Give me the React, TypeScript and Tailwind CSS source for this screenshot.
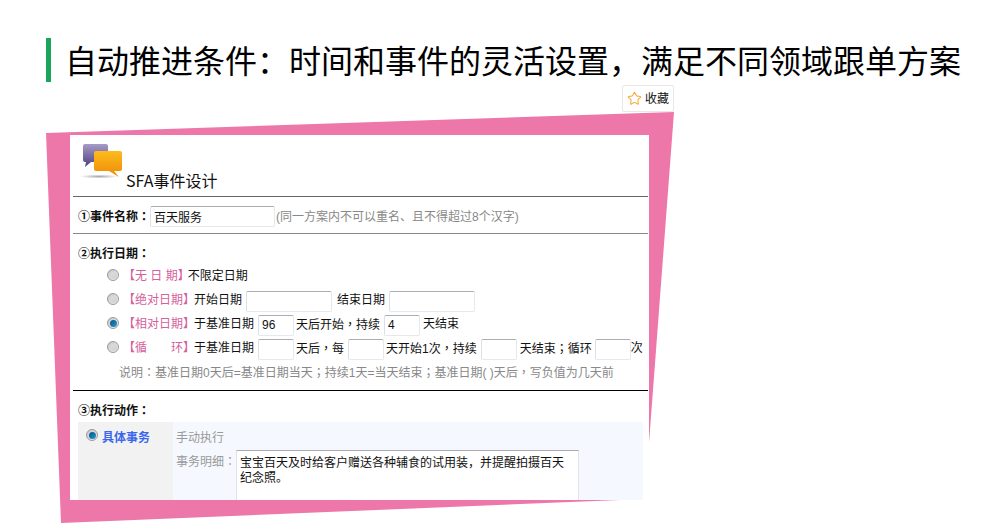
import { Star } from "lucide-react";

function Radio({ checked = false, className = "" }: { checked?: boolean; className?: string }) {
  return (
    <span
      className={`flex h-[12px] w-[12px] shrink-0 items-center justify-center rounded-full border border-[#9a9a9a] bg-gradient-to-br from-[#c4c4c4] to-[#f4f4f4] ${className}`}
    >
      {checked ? (
        <span className="h-[7px] w-[7px] rounded-full bg-gradient-to-br from-[#0a4f86] to-[#22a0d0]" />
      ) : (
        <span className="h-[7px] w-[7px] rounded-full bg-gradient-to-br from-[#dcdcdc] to-[#cfcfcf]" />
      )}
    </span>
  );
}

function Box({ className = "", value = "" }: { className?: string; value?: string }) {
  return (
    <input
      readOnly
      value={value}
      className={`mt-[2px] h-[21px] shrink-0 rounded-[2px] border border-[#e3e9ef] border-t-[#abadb3] border-l-[#dbdfe6] bg-white px-[3px] text-[12px] text-[#111] outline-none ${className}`}
    />
  );
}

// small print uses centred punctuation in the reference
function Mark({ children }: { children: React.ReactNode }) {
  return <span className="font-['Noto_Sans_CJK_TC',sans-serif]">{children}</span>;
}

function DateRow({ checked, children }: { checked?: boolean; children: React.ReactNode }) {
  return (
    <div className="flex h-[24px] items-center whitespace-nowrap pl-[34px] pt-[2px]">
      <Radio checked={checked} className="-mt-[2px]" />
      {children}
    </div>
  );
}

function RowLabel({ children }: { children: React.ReactNode }) {
  return <span className="ml-[4px] w-[71px] shrink-0 text-[#d4609c]">{children}</span>;
}

function ChatIcon() {
  return (
    <svg width="44" height="36" viewBox="0 0 44 36" className="shrink-0">
      <defs>
        <linearGradient id="purple" x1="0" y1="0" x2="0" y2="1">
          <stop offset="0" stopColor="#a79cc6" />
          <stop offset="1" stopColor="#4a3f7e" />
        </linearGradient>
        <linearGradient id="orange" x1="0" y1="0" x2="0" y2="1">
          <stop offset="0" stopColor="#fdbb1c" />
          <stop offset="1" stopColor="#ee8a06" />
        </linearGradient>
        <radialGradient id="shade">
          <stop offset="0" stopColor="#a8a8a8" />
          <stop offset="1" stopColor="#ffffff" />
        </radialGradient>
      </defs>
      <ellipse cx="19" cy="33.5" rx="19" ry="2" fill="url(#shade)" />
      <path
        d="M5 1h21a2 2 0 0 1 2 2v14a2 2 0 0 1-2 2H11l-6 5 1-5H5a2 2 0 0 1-2-2V3a2 2 0 0 1 2-2z"
        fill="url(#purple)"
      />
      <path
        d="M16 8h24a2 2 0 0 1 2 2v16a2 2 0 0 1-2 2h-6l5 6-10-6H16a2 2 0 0 1-2-2V10a2 2 0 0 1 2-2z"
        fill="url(#orange)"
      />
    </svg>
  );
}

export default function App() {
  return (
    <div className="h-[529px] w-[1005px] overflow-hidden bg-white font-['Liberation_Sans','Noto_Sans_CJK_SC',sans-serif] text-[12px] text-[#111]">
      <header className="flex items-start pl-[46px] pt-[38px]">
        <span className="h-[44px] w-[5px] bg-[#1ba55a]" />
        <h1 className="ml-[14px] whitespace-nowrap pt-[2px] text-[32px] font-normal leading-[44px] text-black">
          自动推进条件：时间和事件的灵活设置，满足不同领域跟单方案
        </h1>
      </header>

      <div className="relative mt-[51px] h-[394px] pl-[70px]">
        {/* pink card tilted behind the form */}
        <svg className="absolute left-0 top-[-23px]" width="700" height="420" viewBox="0 0 700 420">
          <polygon points="46,21 674,0 648,344 620,388 61,411" fill="#ee77aa" />
        </svg>

        <div className="absolute left-[622px] top-[-50px] flex h-[27px] w-[52px] items-center justify-center gap-[3px] rounded-[2px] border border-[#e8e8e8] bg-white">
          <Star size={15} strokeWidth={1.8} className="text-[#f5b04a]" />
          <span>收藏</span>
        </div>

        <main className="relative h-[365px] w-[579px] overflow-hidden bg-white pl-[3px]">
          <div className="w-[575px]">
            <div className="flex h-[62px] items-start border-b border-[#666] pl-[7px] pt-[8px]">
              <ChatIcon />
              <span className="ml-[2px] mt-[25px] font-['Noto_Sans_CJK_SC',sans-serif] text-[16px] leading-[24px]">
                SFA事件设计
              </span>
            </div>

            <div className="flex h-[37px] items-center border-b border-[#888] pl-[5px] pt-[3px]">
              <b className="w-[72px] shrink-0 whitespace-nowrap">
                ①事件名称<Mark>：</Mark>
              </b>
              <Box className="!mt-0 w-[125px]" value="百天服务" />
              <span className="ml-[1px] text-[#888]">(同一方案内不可以重名、且不得超过8个汉字)</span>
            </div>

            <section className="h-[157px] border-b border-black pt-[9px]">
              <b className="block h-[20px] whitespace-nowrap pl-[5px] leading-[20px]">
                ②执行日期<Mark>：</Mark>
              </b>
              <DateRow>
                <span className="-mr-[2px] ml-[4px] text-[#d4609c]">【无 日 期】</span>
                不限定日期
              </DateRow>
              <DateRow>
                <RowLabel>【绝对日期】</RowLabel>
                开始日期
                <Box className="ml-[4px] w-[86px]" />
                <span className="ml-[5px]">结束日期</span>
                <Box className="ml-[4px] w-[86px]" />
              </DateRow>
              <DateRow checked>
                <RowLabel>【相对日期】</RowLabel>
                于基准日期
                <Box className="ml-[4px] w-[36px]" value="96" />
                <span className="ml-[2px]">
                  天后开始<Mark>，</Mark>持续
                </span>
                <Box className="ml-[4px] w-[36px]" value="4" />
                <span className="ml-[3px]">天结束</span>
              </DateRow>
              <DateRow>
                <RowLabel>
                  【循<span className="inline-block w-[24px]" />环】
                </RowLabel>
                于基准日期
                <Box className="ml-[4px] w-[36px]" />
                <span className="ml-[2px]">
                  天后<Mark>，</Mark>每
                </span>
                <Box className="ml-[4px] w-[36px]" />
                <span className="ml-[2px]">
                  天开始1次<Mark>，</Mark>持续
                </span>
                <Box className="ml-[4px] w-[36px]" />
                <span className="ml-[3px]">
                  天结束<Mark>；</Mark>循环
                </span>
                <Box className="ml-[3px] w-[36px]" />
                次
              </DateRow>
              <p className="h-[24px] whitespace-nowrap pl-[46px] pt-[1px] leading-[24px] text-[#888]">
                说明<Mark>：</Mark>基准日期0天后=基准日期当天<Mark>；</Mark>持续1天=当天结束<Mark>；</Mark>基准日期( )天后
                <Mark>，</Mark>写负值为几天前
              </p>
            </section>

            <b className="block h-[31px] whitespace-nowrap pl-[5px] pt-[10px] leading-[18px]">
              ③执行动作<Mark>：</Mark>
            </b>

            <div className="ml-[5px] flex h-[78px] w-[565px]">
              <div className="flex w-[95px] shrink-0 items-start bg-[#f2f2f2] pl-[8px] pt-[7px]">
                <Radio checked />
                <b className="ml-[4px] mt-[1px] leading-[16px] text-[#3a66ee]">具体事务</b>
              </div>
              <div className="flex-1 bg-[#f5f9ff] pl-[3px] pt-[8px]">
                <div className="leading-[16px] text-[#999]">手动执行</div>
                <div className="mt-[4px] flex items-start">
                  <span className="w-[60px] shrink-0 whitespace-nowrap pt-[3px] leading-[16px] text-[#999]">
                    事务明细<Mark>：</Mark>
                  </span>
                  <textarea
                    readOnly
                    value="宝宝百天及时给客户赠送各种辅食的试用装，并提醒拍摄百天纪念照。"
                    className="h-[70px] w-[343px] resize-none overflow-hidden border border-[#dfe3ea] border-t-[#abadb3] bg-white px-[3px] py-[5px] text-[12px] leading-[15px] text-[#111] outline-none"
                  />
                </div>
              </div>
            </div>
          </div>
        </main>
      </div>
    </div>
  );
}
